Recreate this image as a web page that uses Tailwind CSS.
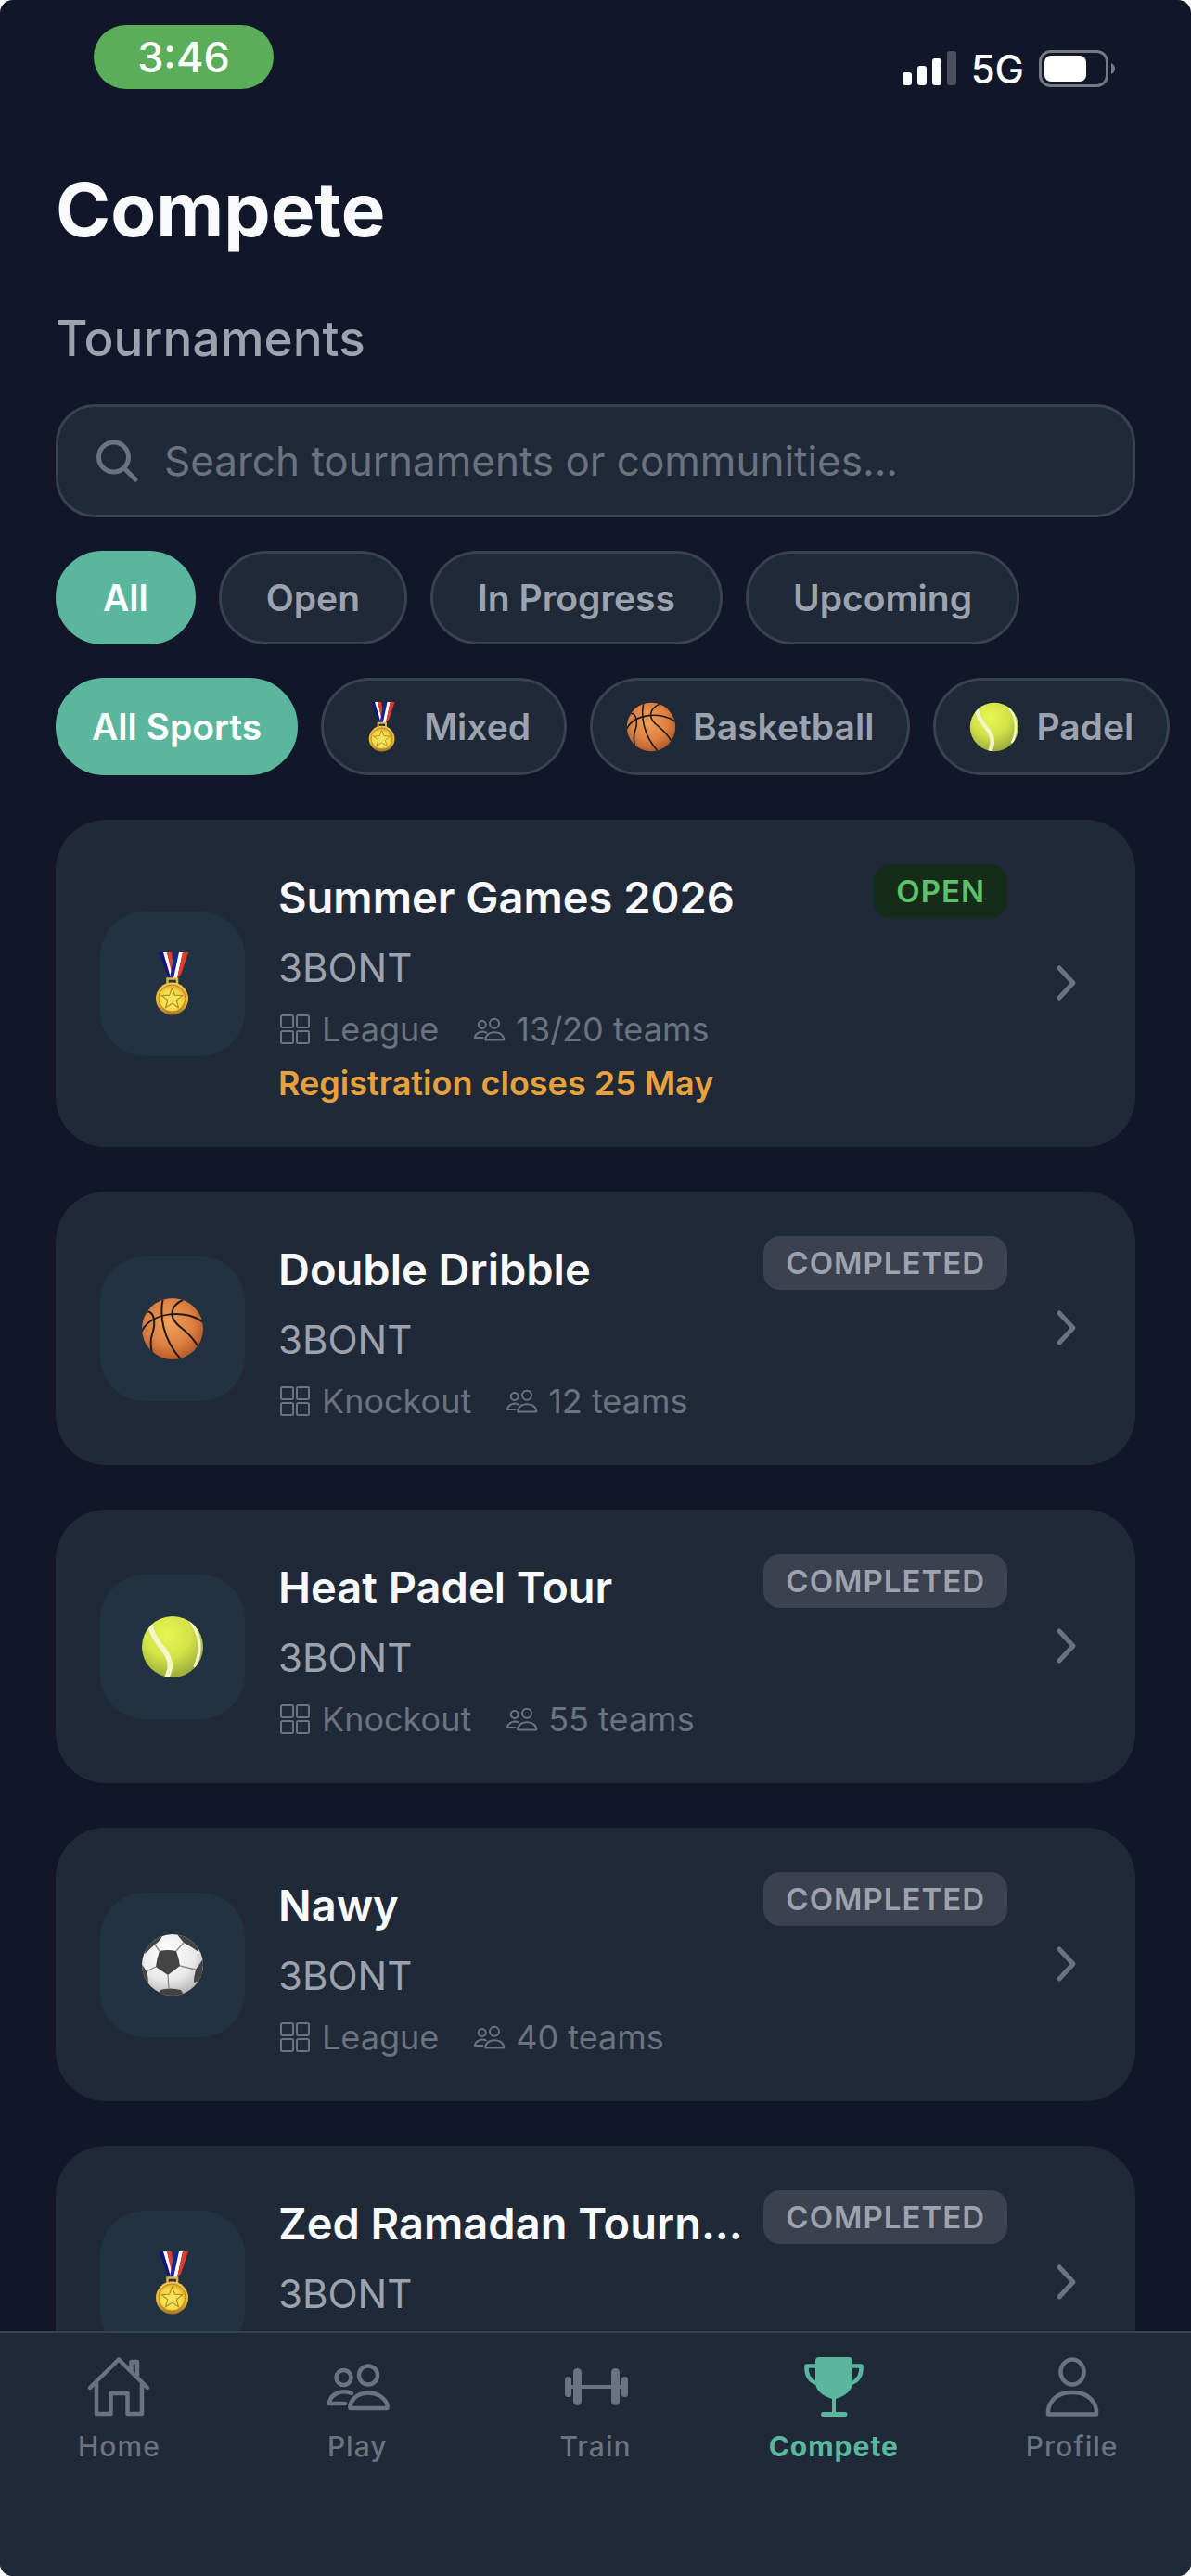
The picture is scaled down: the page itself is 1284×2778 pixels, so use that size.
<!DOCTYPE html>
<html lang="en">
<head>
  <meta charset="UTF-8" />
  <meta name="viewport" content="width=device-width, initial-scale=1.0"/>
  <title>Compete – Tournaments</title>
  <script src="https://cdn.jsdelivr.net/npm/@tailwindcss/browser@4"></script>
</head>
<body class="bg-white font-['Inter','Liberation_Sans',sans-serif]">

  <!-- SHARED ICONS -->
  <svg class="absolute size-0" aria-hidden="true">
    <defs>
      <linearGradient id="gold" x1="0" y1="0" x2="0" y2="1">
        <stop offset="0" stop-color="#f3c64a"/><stop offset=".6" stop-color="#e9b637"/><stop offset="1" stop-color="#a8742a"/>
      </linearGradient>
      <radialGradient id="gold-face" cx=".45" cy=".6" r=".6">
        <stop offset="0" stop-color="#fdf16a"/><stop offset=".7" stop-color="#f2da3f"/><stop offset="1" stop-color="#dba22f"/>
      </radialGradient>
      <radialGradient id="orange" cx=".45" cy=".4" r=".62">
        <stop offset="0" stop-color="#f0a05a"/><stop offset=".6" stop-color="#de8142"/><stop offset="1" stop-color="#b5592a"/>
      </radialGradient>
      <radialGradient id="lime" cx=".42" cy=".3" r=".75">
        <stop offset="0" stop-color="#e6f651"/><stop offset=".5" stop-color="#d3e348"/><stop offset="1" stop-color="#93a43a"/>
      </radialGradient>
      <radialGradient id="leather" cx=".42" cy=".3" r=".75">
        <stop offset="0" stop-color="#ffffff"/><stop offset=".6" stop-color="#e9e9e9"/><stop offset="1" stop-color="#aeaeae"/>
      </radialGradient>
      <clipPath id="ball"><circle cx="34" cy="34" r="33"/></clipPath>
    </defs>

    <symbol id="medal" viewBox="0 0 68 68">
      <path d="M19 0h5l8 26h-3z" fill="#14147c"/>
      <path d="M24 0h4l6 24-2 3z" fill="#fff"/>
      <path d="M28 0h5l2 16-2 6z" fill="#e8392d"/>
      <path d="M36 0h5l-5 28h-5z" fill="#1b2390"/>
      <path d="M41 0h4l-6 28h-4z" fill="#fff"/>
      <path d="M45 0h6l-8 24-4 4z" fill="#e8392d"/>
      <path d="M28.500 34v-5.500h10.500v5.500" fill="none" stroke="#e2b53c" stroke-width="2.500"/>
      <circle cx="33.500" cy="50" r="17.500" fill="url(#gold)"/>
      <circle cx="33.500" cy="49.500" r="14.500" fill="url(#gold-face)" stroke="#b98428" stroke-width="1"/>
      <path d="M33.500 38.500l3 7.700 8.300.4-6.500 5.200 2.200 8-7-4.500-7 4.500 2.200-8-6.500-5.200 8.300-.4z" fill="#f6e45a" stroke="#b78a2b" stroke-width="1.200" stroke-linejoin="round"/>
    </symbol>
    <symbol id="basketball" viewBox="0 0 68 68">
      <circle cx="34" cy="34" r="33" fill="url(#orange)"/>
      <g clip-path="url(#ball)" fill="none" stroke="#1d1a1c" stroke-width="2">
        <path d="M24 0C20 18 22 44 44 68"/>
        <path d="M0 38C10 15 50 12 68 28"/>
        <path d="M45 3C32 9 30 20 39 29C45 35 54 39 62 54"/>
        <path d="M5 16C13 13 17 25 12 40C10 46 10 52 12 60"/>
      </g>
    </symbol>
    <symbol id="tennis" viewBox="0 0 68 68">
      <circle cx="34" cy="34" r="33" fill="url(#lime)"/>
      <g clip-path="url(#ball)" fill="none" stroke="#f3f6cd">
        <path d="M10 10C13 32 34 38 31 58L28 67" stroke-width="5.500"/>
        <path d="M53 6C64 20 66 38 58 56" stroke-width="3.500"/>
      </g>
    </symbol>
    <symbol id="soccer" viewBox="0 0 68 68">
      <circle cx="34" cy="34" r="33" fill="url(#leather)"/>
      <g clip-path="url(#ball)">
        <g fill="#434343">
          <path d="M20 19q9-2 18 0q3 8 4 16l-13 10-13-9q1-9 4-17z"/>
          <path d="M4 22l2-14 20-8-3 3q-3 6-8 9z"/>
          <path d="M38 0l22 6 2 14q-8-6-16-10z"/>
          <path d="M68 26l-9 13q-2 8-2 14l8-2z"/>
          <path d="M21 61q9-3 22 0l4 7H18z"/>
          <path d="M0 32l6 9q2 6 2 13l-8-6z"/>
        </g>
        <path d="M20 19l-5-7M38 19l8-9M42 35l17 4M29 45l1 15M16 36L6 41" fill="none" stroke="#8b8b8b" stroke-width="1.300"/>
      </g>
    </symbol>

    <symbol id="grid" viewBox="0 0 36 36">
      <g fill="none" stroke="currentColor" stroke-width="2">
        <rect x="3" y="3" width="13" height="13" rx="1.500"/><rect x="20" y="3" width="13" height="13" rx="1.500"/>
        <rect x="3" y="20" width="13" height="13" rx="1.500"/><rect x="20" y="20" width="13" height="13" rx="1.500"/>
      </g>
    </symbol>
    <symbol id="people" viewBox="0 0 72 72">
      <g fill="none" stroke="currentColor" stroke-linecap="round" stroke-linejoin="round">
        <circle cx="21.500" cy="26" r="8"/>
        <circle cx="48" cy="23.500" r="10"/>
        <path d="M28.500 59Q28 57 29 54C32 47 39 42.500 48 42.500S65 47 68 54Q69 57 68.500 59z"/>
        <path d="M30 43C20 38.500 8 43 5.500 54H23"/>
      </g>
    </symbol>
    <symbol id="chevron" viewBox="0 0 54 54">
      <path d="M20 10l15 16-15 16" fill="none" stroke="currentColor" stroke-width="5" stroke-linecap="round" stroke-linejoin="round"/>
    </symbol>
  </svg>

  <div class="h-screen flex flex-col overflow-hidden rounded-[14px] bg-[#111628] text-[#9ca3af]">

    <!-- STATUS BAR -->
    <div class="h-[176px] shrink-0 flex justify-between items-start pl-[101px] pr-[82px] pt-[27px] text-white">
      <div class="h-[69px] w-[194px] rounded-full bg-[#5aae5a] flex items-center justify-center text-[45px] font-medium">3:46</div>
      <div class="h-[40px] mt-[27px] flex items-center gap-4">
        <svg class="w-[58px] h-[38px]" viewBox="0 0 58 38" fill="currentColor">
          <rect x="0" y="23" width="10" height="14" rx="3"/><rect x="16" y="16" width="10" height="21" rx="3"/>
          <rect x="32" y="8" width="10" height="29" rx="3"/><rect x="48" y="0" width="10" height="37" rx="3" opacity=".25"/>
        </svg>
        <span class="text-[42px] font-medium">5G</span>
        <svg class="w-[82px] h-[40px]" viewBox="0 0 82 40">
          <rect x="1.500" y="1.500" width="72" height="37" rx="11" fill="none" stroke="#757a86" stroke-width="3"/>
          <rect x="6" y="6" width="45" height="28" rx="7" fill="#fff"/>
          <path d="M78 14q4 2 4 6t-4 6z" fill="#757a86"/>
        </svg>
      </div>
    </div>

    <main class="flex-1 min-h-0 overflow-hidden px-[60px]">
      <h1 class="text-[80px] leading-[100px] font-bold text-gray-50">Compete</h1>
      <h2 class="mt-[57px] text-[53px] leading-[64px] font-medium">Tournaments</h2>

      <!-- SEARCH -->
      <label class="mt-[39px] h-[122px] flex items-center gap-6 px-9 rounded-[42px] border-3 border-[#384251] bg-[#202938] text-[#6b7280]">
        <svg class="size-[54px] shrink-0" viewBox="0 0 54 54" fill="none" stroke="currentColor" stroke-width="5" stroke-linecap="round">
          <circle cx="23.500" cy="23" r="16"/><path d="M35 35l12 12"/>
        </svg>
        <input type="text" aria-label="Search" placeholder="Search tournaments or communities..." class="flex-1 min-w-0 bg-transparent outline-none text-[44px] placeholder:text-[#6b7280]">
      </label>

      <!-- STATUS FILTERS -->
      <div class="mt-9 flex gap-[25px] text-[39px] leading-[47px] font-semibold">
        <button class="h-[101px] px-12 rounded-full border-3 border-[#5ab79e] bg-[#5ab79e] text-white">All</button>
        <button class="h-[101px] px-12 rounded-full border-3 border-[#384251] bg-[#202938]">Open</button>
        <button class="h-[101px] px-12 rounded-full border-3 border-[#384251] bg-[#202938]">In Progress</button>
        <button class="h-[101px] px-12 rounded-full border-3 border-[#384251] bg-[#202938]">Upcoming</button>
      </div>

      <!-- SPORT FILTERS -->
      <div class="mt-9 -mr-[60px] flex gap-[25px] overflow-hidden whitespace-nowrap text-[39px] leading-[47px] font-semibold">
        <button class="h-[105px] shrink-0 px-9 rounded-full border-3 border-[#5ab79e] bg-[#5ab79e] text-white">All Sports</button>
        <button class="h-[105px] shrink-0 px-9 rounded-full border-3 border-[#384251] bg-[#202938] flex items-center gap-[18px]"><svg class="size-[54px]"><use href="#medal"/></svg>Mixed</button>
        <button class="h-[105px] shrink-0 px-9 rounded-full border-3 border-[#384251] bg-[#202938] flex items-center gap-[18px]"><svg class="size-[54px]"><use href="#basketball"/></svg>Basketball</button>
        <button class="h-[105px] shrink-0 px-9 rounded-full border-3 border-[#384251] bg-[#202938] flex items-center gap-[18px]"><svg class="size-[54px]"><use href="#tennis"/></svg>Padel</button>
      </div>

      <!-- TOURNAMENT LIST -->
      <div class="mt-12 flex flex-col gap-12">
        <a href="#" class="flex items-center gap-9 p-12 rounded-[54px] bg-[#202938]">
          <div class="size-[156px] shrink-0 rounded-[48px] bg-[#233240] flex items-center justify-center"><svg class="size-[68px]"><use href="#medal"/></svg></div>
          <div class="flex-1 min-w-0">
            <div class="flex items-start justify-between gap-4">
              <h3 class="truncate text-[47px] leading-[72px] font-semibold text-gray-50">Summer Games 2026</h3>
              <span class="shrink-0 px-6 rounded-[18px] bg-[#152c19] text-[#5dc26a] text-[33px] leading-[58px] font-semibold tracking-[1px]">OPEN</span>
            </div>
            <p class="mt-[10px] text-[42px] leading-[59px]">3BONT</p>
            <div class="mt-4 flex gap-9 text-[36px] leading-[42px] text-[#6b7280]">
              <span class="flex items-center gap-[11px]"><svg class="size-9"><use href="#grid"/></svg>League</span>
              <span class="flex items-center gap-[11px]"><svg class="size-9 stroke-4"><use href="#people"/></svg>13/20 teams</span>
            </div>
            <p class="mt-4 text-[36px] leading-[42px] font-semibold text-[#e8a13c]">Registration closes 25 May</p>
          </div>
          <svg class="size-[54px] shrink-0 text-[#6b7280]"><use href="#chevron"/></svg>
        </a>

        <a href="#" class="flex items-center gap-9 p-12 rounded-[54px] bg-[#202938]">
          <div class="size-[156px] shrink-0 rounded-[48px] bg-[#233240] flex items-center justify-center"><svg class="size-[68px]"><use href="#basketball"/></svg></div>
          <div class="flex-1 min-w-0">
            <div class="flex items-start justify-between gap-4">
              <h3 class="truncate text-[47px] leading-[72px] font-semibold text-gray-50">Double Dribble</h3>
              <span class="shrink-0 px-6 rounded-[18px] bg-[#3c414f] text-[33px] leading-[58px] font-semibold tracking-[1px]">COMPLETED</span>
            </div>
            <p class="mt-[10px] text-[42px] leading-[59px]">3BONT</p>
            <div class="mt-4 flex gap-9 text-[36px] leading-[42px] text-[#6b7280]">
              <span class="flex items-center gap-[11px]"><svg class="size-9"><use href="#grid"/></svg>Knockout</span>
              <span class="flex items-center gap-[11px]"><svg class="size-9 stroke-4"><use href="#people"/></svg>12 teams</span>
            </div>
          </div>
          <svg class="size-[54px] shrink-0 text-[#6b7280]"><use href="#chevron"/></svg>
        </a>

        <a href="#" class="flex items-center gap-9 p-12 rounded-[54px] bg-[#202938]">
          <div class="size-[156px] shrink-0 rounded-[48px] bg-[#233240] flex items-center justify-center"><svg class="size-[68px]"><use href="#tennis"/></svg></div>
          <div class="flex-1 min-w-0">
            <div class="flex items-start justify-between gap-4">
              <h3 class="truncate text-[47px] leading-[72px] font-semibold text-gray-50">Heat Padel Tour</h3>
              <span class="shrink-0 px-6 rounded-[18px] bg-[#3c414f] text-[33px] leading-[58px] font-semibold tracking-[1px]">COMPLETED</span>
            </div>
            <p class="mt-[10px] text-[42px] leading-[59px]">3BONT</p>
            <div class="mt-4 flex gap-9 text-[36px] leading-[42px] text-[#6b7280]">
              <span class="flex items-center gap-[11px]"><svg class="size-9"><use href="#grid"/></svg>Knockout</span>
              <span class="flex items-center gap-[11px]"><svg class="size-9 stroke-4"><use href="#people"/></svg>55 teams</span>
            </div>
          </div>
          <svg class="size-[54px] shrink-0 text-[#6b7280]"><use href="#chevron"/></svg>
        </a>

        <a href="#" class="flex items-center gap-9 p-12 rounded-[54px] bg-[#202938]">
          <div class="size-[156px] shrink-0 rounded-[48px] bg-[#233240] flex items-center justify-center"><svg class="size-[68px]"><use href="#soccer"/></svg></div>
          <div class="flex-1 min-w-0">
            <div class="flex items-start justify-between gap-4">
              <h3 class="truncate text-[47px] leading-[72px] font-semibold text-gray-50">Nawy</h3>
              <span class="shrink-0 px-6 rounded-[18px] bg-[#3c414f] text-[33px] leading-[58px] font-semibold tracking-[1px]">COMPLETED</span>
            </div>
            <p class="mt-[10px] text-[42px] leading-[59px]">3BONT</p>
            <div class="mt-4 flex gap-9 text-[36px] leading-[42px] text-[#6b7280]">
              <span class="flex items-center gap-[11px]"><svg class="size-9"><use href="#grid"/></svg>League</span>
              <span class="flex items-center gap-[11px]"><svg class="size-9 stroke-4"><use href="#people"/></svg>40 teams</span>
            </div>
          </div>
          <svg class="size-[54px] shrink-0 text-[#6b7280]"><use href="#chevron"/></svg>
        </a>

        <a href="#" class="flex items-center gap-9 p-12 rounded-[54px] bg-[#202938]">
          <div class="size-[156px] shrink-0 rounded-[48px] bg-[#233240] flex items-center justify-center"><svg class="size-[68px]"><use href="#medal"/></svg></div>
          <div class="flex-1 min-w-0">
            <div class="flex items-start justify-between gap-4">
              <h3 class="truncate text-[47px] leading-[72px] font-semibold text-gray-50">Zed Ramadan Tourn...</h3>
              <span class="shrink-0 px-6 rounded-[18px] bg-[#3c414f] text-[33px] leading-[58px] font-semibold tracking-[1px]">COMPLETED</span>
            </div>
            <p class="mt-[10px] text-[42px] leading-[59px]">3BONT</p>
            <div class="mt-4 h-[42px]"></div>
          </div>
          <svg class="size-[54px] shrink-0 text-[#6b7280]"><use href="#chevron"/></svg>
        </a>
      </div>
    </main>

    <!-- TAB BAR -->
    <nav class="h-[264px] shrink-0 grid grid-cols-5 items-start border-t-2 border-[#384251] bg-[#202938] pt-[22px] text-[30px] leading-[36px] font-medium tracking-[1px] text-[#6b7280]">
      <a href="#" class="flex flex-col items-center gap-[10px]">
        <svg class="size-[72px]" viewBox="0 0 72 72" fill="none" stroke="currentColor" stroke-width="4.500" stroke-linecap="round" stroke-linejoin="round">
          <path d="M5 37L36 6.500 67 37M49.500 18V9h6.500v17M12 32v33h15.500V43h18v22H61V32"/>
        </svg>
        Home
      </a>
      <a href="#" class="flex flex-col items-center gap-[10px]">
        <svg class="size-[72px] stroke-[4.5]"><use href="#people"/></svg>
        Play
      </a>
      <a href="#" class="flex flex-col items-center gap-[10px]">
        <svg class="size-[72px]" viewBox="0 0 72 72" fill="currentColor">
          <rect x="3" y="25" width="7" height="22" rx="3.500"/><rect x="12" y="16" width="9" height="40" rx="4.500"/>
          <rect x="53" y="16" width="9" height="40" rx="4.500"/><rect x="64" y="25" width="7" height="22" rx="3.500"/>
          <rect x="7" y="34" width="60" height="4"/>
        </svg>
        Train
      </a>
      <a href="#" aria-current="page" class="flex flex-col items-center gap-[10px] font-bold text-[#5ab79e]">
        <svg class="size-[72px]" viewBox="0 0 72 72" fill="currentColor">
          <path d="M20 4h32q4 0 4 4v23q0 12-18 18v14h10a2.500 2.500 0 0 1 0 5H24.500a2.500 2.500 0 0 1 0-5H34V49q-18-6-18-18V8q0-4 4-4z"/>
          <path d="M17 13.500H6.500C6 22 9 29 17 32M55 13.500h10.500C66 22 63 29 55 32" fill="none" stroke="currentColor" stroke-width="4.500" stroke-linejoin="round"/>
        </svg>
        Compete
      </a>
      <a href="#" class="flex flex-col items-center gap-[10px]">
        <svg class="size-[72px]" viewBox="0 0 72 72" fill="none" stroke="currentColor" stroke-width="4.500" stroke-linejoin="round">
          <ellipse cx="36" cy="20" rx="12.500" ry="13.500"/>
          <path d="M10 65.500Q9.500 61 11 57C15 47 24 42 36 42s21 5 25 15q1.500 4 1 8.500z"/>
        </svg>
        Profile
      </a>
    </nav>
  </div>
</body>
</html>
